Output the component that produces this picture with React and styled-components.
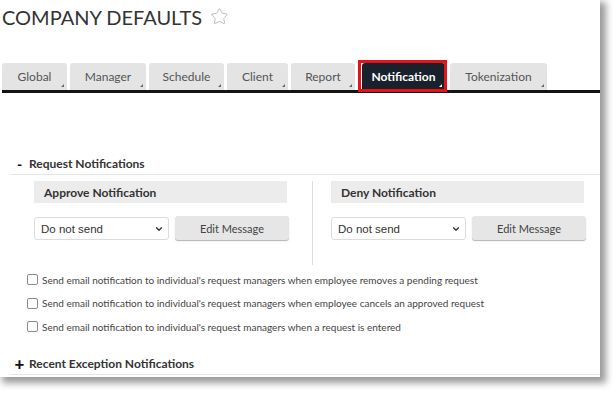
import styled, { createGlobalStyle } from "styled-components";
import { Star, ChevronDown } from "lucide-react";

const GlobalStyle = createGlobalStyle`
  html, body {
    margin: 0;
    padding: 0;
    background: #fff;
  }
  body {
    font-family: Lato, "Open Sans", sans-serif;
    color: #333;
  }
`;

const Page = styled.div`
  width: 616px;
  height: 393px;
  background: #fff;
  overflow: hidden;
`;

const Card = styled.div`
  width: 600px;
  height: 377px;
  background: #fff;
  box-shadow: 4px 4px 7px 2px rgba(0, 0, 0, 0.4);
  overflow: hidden;
`;

const TitleRow = styled.div`
  display: flex;
  align-items: center;
  padding: 4px 0 0 2px;
  height: 26px;
`;

const Title = styled.h1`
  margin: 0;
  font-size: 20px;
  line-height: 26px;
  font-weight: 400;
  color: #333;
`;

const StarIcon = styled(Star)`
  margin-left: 8px;
  margin-top: -2px;
  color: #b9b9b9;
`;

const TabBar = styled.div`
  display: flex;
  gap: 3px;
  margin: 33px 0 0 2px;
  border-bottom: 3px solid #141414;
`;

const Tab = styled.div`
  position: relative;
  width: ${(p) => p.$w}px;
  height: 27px;
  margin: ${(p) => (p.$active ? "0 2px 0 4px" : "0")};
  display: flex;
  align-items: center;
  justify-content: center;
  border-radius: 3px 3px 0 0;
  background: ${(p) => (p.$active ? "#19212c" : "#e4e4e4")};
  color: ${(p) => (p.$active ? "#fff" : "#555")};
  font-size: 12px;
  font-weight: ${(p) => (p.$active ? 700 : 400)};

  &::after {
    content: "";
    position: absolute;
    right: 3px;
    bottom: 3px;
    border-left: 3px solid transparent;
    border-bottom: 3px solid ${(p) => (p.$active ? "#fff" : "#666")};
  }
`;

const Highlight = styled.span`
  position: absolute;
  top: -3px;
  left: -4px;
  right: -2px;
  bottom: -2px;
  border: 3px solid #e3131b;
  pointer-events: none;
`;

const SectionHeader = styled.div`
  display: flex;
  align-items: center;
  margin: ${(p) => p.$top}px 0 0 10px;
  padding-bottom: 2px;
  line-height: 16px;
  border-bottom: 1px solid #e6e6e6;
  font-size: 12px;
  font-weight: 700;
  color: #333;
`;

const Sign = styled.span`
  width: 19px;
  text-align: center;
  font-size: ${(p) => (p.$plus ? "17px" : "14px")};
  font-weight: 900;
  color: #111;
`;

const Columns = styled.div`
  display: flex;
  margin: 6px 0 0 34px;
`;

const Column = styled.div`
  width: 255px;
  padding-bottom: 25px;
`;

const Divider = styled.div`
  width: 1px;
  background: #dcdcdc;
  margin: 0 18px 0 23px;
  align-self: stretch;
`;

const BoxTitle = styled.div`
  width: 243px;
  height: 22px;
  padding-left: 10px;
  display: flex;
  align-items: center;
  background: #ececec;
  font-size: 12px;
  font-weight: 700;
  color: #333;
`;

const ControlRow = styled.div`
  display: flex;
  align-items: center;
  gap: 6px;
  margin-top: 13px;
`;

const SelectWrap = styled.div`
  position: relative;
  width: 135px;
  height: 23px;
`;

const Select = styled.select`
  appearance: none;
  width: 100%;
  height: 100%;
  margin: 0;
  padding: 0 0 0 6px;
  border: 1px solid #dcdcdc;
  border-radius: 3px;
  background: #fff;
  font-family: "Liberation Sans", Arial, sans-serif;
  font-size: 11.5px;
  color: #333;
  outline: none;
`;

const Chevron = styled(ChevronDown)`
  position: absolute;
  right: 5px;
  top: 7px;
  color: #333;
  pointer-events: none;
`;

const Button = styled.button`
  width: 114px;
  height: 24px;
  margin: 0;
  padding: 0;
  border: none;
  border-radius: 3px;
  background: #e6e6e6;
  box-shadow: 0 1px 1px rgba(0, 0, 0, 0.3);
  font-family: Lato, sans-serif;
  font-size: 11px;
  color: #444;
`;

const CheckList = styled.div`
  margin-top: 3px;
  padding-left: 27px;
`;

const CheckRow = styled.label`
  display: flex;
  align-items: center;
  height: 23.5px;
  font-size: 10px;
  color: #444;
`;

const Box = styled.span`
  width: 9px;
  height: 9px;
  margin-right: 4px;
  border: 1px solid #8a8a8a;
  border-radius: 2px;
  background: #fff;
  flex-shrink: 0;
`;

const tabs = [
  { name: "Global", w: 65 },
  { name: "Manager", w: 76 },
  { name: "Schedule", w: 75 },
  { name: "Client", w: 61 },
  { name: "Report", w: 64 },
  { name: "Notification", w: 83, active: true },
  { name: "Tokenization", w: 97 },
];

const checks = [
  "Send email notification to individual's request managers when employee removes a pending request",
  "Send email notification to individual's request managers when employee cancels an approved request",
  "Send email notification to individual's request managers when a request is entered",
];

function NotificationColumn({ title }) {
  return (
    <Column>
      <BoxTitle>{title}</BoxTitle>
      <ControlRow>
        <SelectWrap>
          <Select defaultValue="none">
            <option value="none">Do not send</option>
          </Select>
          <Chevron size={10} strokeWidth={3} />
        </SelectWrap>
        <Button>Edit Message</Button>
      </ControlRow>
    </Column>
  );
}

export default function App() {
  return (
    <Page>
      <GlobalStyle />
      <Card>
        <TitleRow>
          <Title>COMPANY DEFAULTS</Title>
          <StarIcon size={19} strokeWidth={1.2} />
        </TitleRow>

        <TabBar>
          {tabs.map((t) => (
            <Tab key={t.name} $w={t.w} $active={t.active}>
              {t.name}
              {t.active && <Highlight />}
            </Tab>
          ))}
        </TabBar>

        <SectionHeader $top={63}>
          <Sign>-</Sign>
          Request Notifications
        </SectionHeader>

        <Columns>
          <NotificationColumn title="Approve Notification" />
          <Divider />
          <NotificationColumn title="Deny Notification" />
        </Columns>

        <CheckList>
          {checks.map((c) => (
            <CheckRow key={c}>
              <Box />
              {c}
            </CheckRow>
          ))}
        </CheckList>

        <SectionHeader $top={17}>
          <Sign $plus>+</Sign>
          Recent Exception Notifications
        </SectionHeader>
      </Card>
    </Page>
  );
}
